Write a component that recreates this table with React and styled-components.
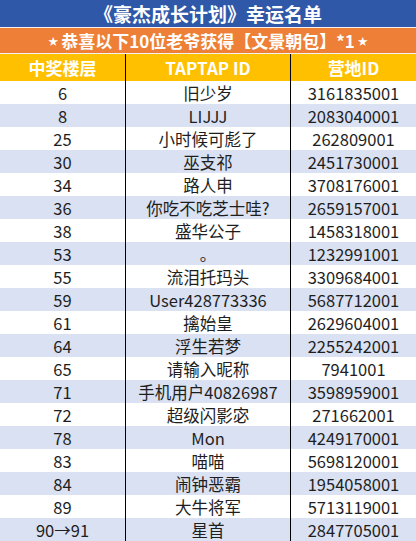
import React from "react";
import styled, { createGlobalStyle } from "styled-components";

const Global = createGlobalStyle`
  html, body { margin: 0; padding: 0; background: #fff; }
  body { font-family: "Noto Sans CJK SC", "Noto Sans", sans-serif; }
`;

const Sheet = styled.div`
  width: 416px;
  display: flex;
  flex-direction: column;
`;

const Title = styled.div`
  height: 27px;
  border-bottom: 1px solid #f2f2f2;
  background: #2f58a8;
  color: #fff;
  font-weight: 700;
  font-size: 19px;
  display: flex;
  align-items: center;
  justify-content: center;
  line-height: 1;
`;

const Sub = styled.div`
  height: 25px;
  border-bottom: 1px solid #f2f2f2;
  background: #ee7f36;
  color: #fff;
  font-weight: 700;
  font-size: 17px;
  display: flex;
  align-items: center;
  justify-content: center;
  line-height: 1;
`;

const Star = styled.span`
  font-size: 10px;
  margin: 0 3px;
`;

const Grid = styled.div`
  display: grid;
  grid-template-columns: 125px 165px 126px;
`;

const HeadCell = styled.div`
  height: 27px;
  background: #ffc000;
  color: #fff;
  font-weight: 700;
  font-size: 17px;
  display: flex;
  align-items: center;
  justify-content: center;
  box-sizing: border-box;
  border-left: ${(p) => (p.$first ? "none" : "1px solid #000")};
`;

const Cell = styled.div`
  height: 23px;
  padding-top: 1px;
  background: ${(p) => (p.$alt ? "#d9e1f2" : "#fff")};
  color: #1e1e1e;
  font-size: 16.5px;
  display: flex;
  align-items: center;
  justify-content: center;
  box-sizing: border-box;
  border-left: ${(p) => (p.$first ? "none" : "1px solid #000")};
  white-space: nowrap;
`;

const rows = [
  ["6", "旧少岁", "3161835001"],
  ["8", "LIJJJ", "2083040001"],
  ["25", "小时候可彪了", "262809001"],
  ["30", "巫支祁", "2451730001"],
  ["34", "路人申", "3708176001"],
  ["36", "你吃不吃芝士哇?", "2659157001"],
  ["38", "盛华公子", "1458318001"],
  ["53", "。", "1232991001"],
  ["55", "流泪托玛头", "3309684001"],
  ["59", "User428773336", "5687712001"],
  ["61", "擒始皇", "2629604001"],
  ["64", "浮生若梦", "2255242001"],
  ["65", "请输入昵称", "7941001"],
  ["71", "手机用户40826987", "3598959001"],
  ["72", "超级闪影宓", "271662001"],
  ["78", "Mon", "4249170001"],
  ["83", "喵喵", "5698120001"],
  ["84", "闹钟恶霸", "1954058001"],
  ["89", "大牛将军", "5713119001"],
  ["90→91", "星首", "2847705001"],
];

export default function App() {
  return (
    <>
      <Global />
      <Sheet>
        <Title>《豪杰成长计划》幸运名单</Title>
        <Sub>
          <Star>★</Star>恭喜以下10位老爷获得【文景朝包】*1<Star>★</Star>
        </Sub>
        <Grid>
          <HeadCell $first>中奖楼层</HeadCell>
          <HeadCell>TAPTAP ID</HeadCell>
          <HeadCell>营地ID</HeadCell>
          {rows.map((r, i) =>
            r.map((v, j) => (
              <Cell key={i + "-" + j} $first={j === 0} $alt={i % 2 === 1}>
                {v}
              </Cell>
            ))
          )}
        </Grid>
      </Sheet>
    </>
  );
}
